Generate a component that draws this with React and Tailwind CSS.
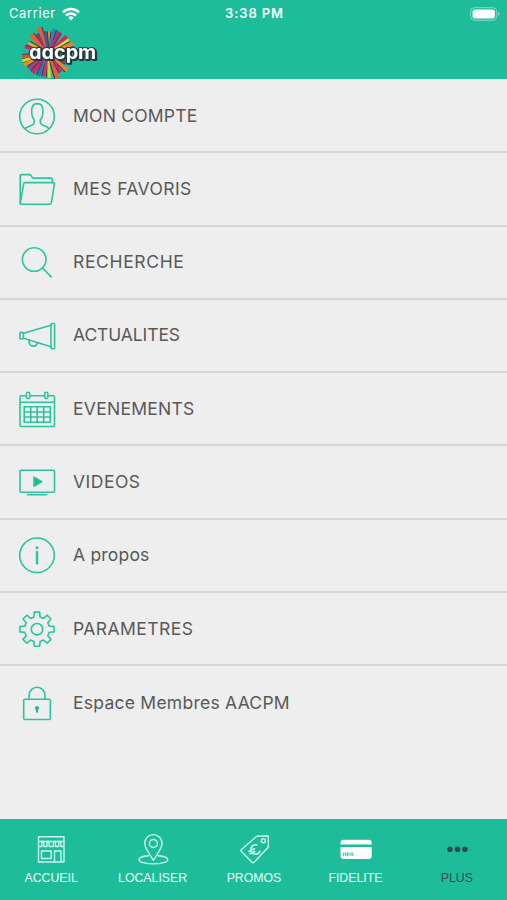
const Icon = ({ children }) => (
    <svg
        viewBox="0 0 40 40"
        className="h-10 w-10 shrink-0"
        fill="none"
        stroke="#2cc3a0"
        strokeWidth="1.6"
        strokeLinejoin="round"
        strokeLinecap="round"
    >
        {children}
    </svg>
);

const TabIcon = ({ children }) => (
    <svg
        viewBox="0 0 36 36"
        className="h-9 w-9"
        fill="none"
        stroke="#c9f7ea"
        strokeWidth="1.4"
        strokeLinejoin="round"
        strokeLinecap="round"
    >
        {children}
    </svg>
);

// Eight teeth, four points each
const gearPoints = Array.from({ length: 8 }, (_, i) =>
    [
        [-14, 12.6],
        [-9, 17.3],
        [9, 17.3],
        [14, 12.6],
    ].map(([deg, r]) => {
        const a = ((i * 45 + deg) * Math.PI) / 180;
        return `${(20 + r * Math.sin(a)).toFixed(2)},${(20.2 - r * Math.cos(a)).toFixed(2)}`;
    })
)
    .flat()
    .join(' ');

const menu = [
    {
        label: 'MON COMPTE',
        spacing: 'tracking-[0.22px]',
        icon: (
            <>
                <circle cx="20" cy="20.5" r="17.3" />
                <path d="M8.5 32.300c1.500-2 7.300-2.500 8.500-5 .5-1.200.3-2.500.1-3.600-1.700-1.600-2.100-3.500-2.300-6-.5-5.500.2-10.100 5.500-10.100s6 4.600 5.500 10.100c-.2 2.500-.6 4.400-2.300 6-.2 1.100-.4 2.400.1 3.600 1.200 2.500 6.900 3 7.900 5" />
            </>
        ),
    },
    {
        label: 'MES FAVORIS',
        spacing: 'tracking-[0.42px]',
        icon: (
            <>
                <path d="M3.2 34.5V6.8q0-1.200 1.200-1.200h8.300q.8 0 1.300.8l1.200 2q.5.700 1.300.7h17.300q1.500 0 1.500 1.500v2.900" />
                <path d="M7.9 13.6h28.400q1.300 0 1.100 1.300l-3 19q-.3 1.400-1.500 1.400H4.300q-1.200 0-1-1.300L6.700 14.700q.2-1.100 1.200-1.100z" />
            </>
        ),
    },
    {
        label: 'RECHERCHE',
        spacing: 'tracking-[0.65px]',
        icon: (
            <>
                <circle cx="17.2" cy="17.5" r="11.8" />
                <path d="M25.5 26l8.700 8.900" />
            </>
        ),
    },
    {
        label: 'ACTUALITES',
        spacing: 'tracking-[-0.1px]',
        icon: (
            <>
                <rect x="2.8" y="16.4" width="3.6" height="6.6" rx="1" />
                <path d="M6.4 17.300L34 9.200M6.400 22.200L34 30.800M12 24.200c-.4 3.800 1.500 5.900 4.300 5.900 2.500 0 3.700-1.200 4-3" />
                <rect x="34" y="7.5" width="3.6" height="25.3" rx="1" />
            </>
        ),
    },
    {
        label: 'EVENEMENTS',
        spacing: 'tracking-[0.27px]',
        icon: (
            <>
                <path d="M9.4 6.700H4.200q-1.200 0-1.200 1.200v28.300q0 1.300 1.200 1.300h32q1.300 0 1.300-1.300V7.900q0-1.200-1.300-1.200H31M13 6.700h14.400M3 13.300h34.500" />
                <rect x="9.5" y="3.2" width="3.3" height="6.5" rx="1.6" />
                <rect x="27.6" y="3.2" width="3.3" height="6.5" rx="1.6" />
                <path d="M7.2 17.800h26.100v15.400H7.200zM7.200 23h26.100M7.200 28h26.100M13.700 17.800v15.400M20.200 17.800v15.400M26.700 17.800v15.400" />
            </>
        ),
    },
    {
        label: 'VIDEOS',
        spacing: 'tracking-[0.5px]',
        icon: (
            <>
                <rect x="3" y="8.3" width="34.5" height="22" rx="1" />
                <path d="M10.5 32.700h19" />
                <path d="M17 15.200v9l7.700-4.500z" fill="#15b995" />
            </>
        ),
    },
    {
        label: 'A propos',
        spacing: 'tracking-[0.2px]',
        icon: (
            <>
                <circle cx="20" cy="20.3" r="17.3" />
                <path d="M20 17v11.300" strokeWidth="2.4" />
                <circle cx="20" cy="12.7" r="1.5" fill="#2cc3a0" stroke="none" />
            </>
        ),
    },
    {
        label: 'PARAMETRES',
        spacing: 'tracking-[0.45px]',
        icon: (
            <>
                <polygon points={gearPoints} />
                <circle cx="20" cy="20.2" r="5.7" />
            </>
        ),
    },
    {
        label: 'Espace Membres AACPM',
        spacing: 'tracking-[0.25px]',
        icon: (
            <>
                <rect x="6.7" y="16.2" width="26.6" height="20.3" rx="1" />
                <path d="M12 16v-3.500a8 8.300 0 0 1 16 0V16" />
                <circle cx="20" cy="25" r="2" fill="#15b995" stroke="none" />
                <path d="M20 25v3.700" stroke="#15b995" strokeWidth="2.2" />
            </>
        ),
    },
];

const tabs = [
    {
        label: 'ACCUEIL',
        icon: (
            <>
                <path d="M5.500 16.500V31H31V16.500M5.500 5.800H31v4.700H5.500zM8.500 20h9.700v7.500H8.500zM21.500 31V20H28v11" />
                <path d="M5.500 10.500v5h3.200v-5h2.100v5h3.200v-5h2.100v5h4.300v-5h2.100v5h3.200v-5h2.100v5H31v-5" />
            </>
        ),
    },
    {
        label: 'LOCALISER',
        icon: (
            <>
                <path d="M18.400 29.500C15.200 23.500 9.700 17.500 9.700 12.300a8.700 8.700 0 0 1 17.400 0c0 5.200-5.500 11.200-8.700 17.200z" />
                <circle cx="18.4" cy="12.5" r="4" />
                <path d="M13.500 24.700c-5.500.4-9.500 2-9.500 4 0 2.300 6.500 4.200 14.400 4.200s14.400-1.900 14.400-4.200c0-2-4-3.600-9.500-4" />
            </>
        ),
    },
    {
        label: 'PROMOS',
        icon: (
            <>
                <path d="M20.700 5.300L31 4.700q1.300 0 1.300 1.300v10.200L18 31.300q-1 1-2 0L5.500 20.500q-.9-1 0-2z" />
                <circle cx="27.3" cy="9.7" r="2" />
                <g transform="rotate(-25 19 19)" strokeWidth="1.7">
                    <path d="M22.800 15.300a4.700 4.700 0 1 0 0 7M13 17.700h6M13 20.300h5" />
                </g>
            </>
        ),
    },
    {
        label: 'FIDELITE',
        icon: (
            <g stroke="none" fill="#fff">
                <path d="M3.500 13.500v-1.700q0-3.100 3-3.100h25q3.200 0 3.200 3.100v1.700zM3.500 16h31.200v9q0 3-3.200 3h-25q-3 0-3-3z" />
                <path
                    d="M6.500 24.500v-2.500h2v2.500M10.200 25v-3h1.900v1.900h-1.900M14 24.500v-2.500h1.500v2.500"
                    fill="none"
                    stroke="#5acfb8"
                    strokeWidth="1.2"
                />
            </g>
        ),
    },
    {
        label: 'PLUS',
        active: true,
        icon: (
            <g stroke="none" fill="#304b4e">
                <circle cx="11" cy="18.2" r="2.8" />
                <circle cx="18.5" cy="18.2" r="2.8" />
                <circle cx="26" cy="18.2" r="2.8" />
            </g>
        ),
    },
];

// [angle, length, colour, width]
const rays = [
    [2, 22, '#f08a24', 3],
    [15, 25, '#2a84b8', 3.6],
    [28, 24, '#d81f74', 4],
    [48, 25, '#d22672', 3.8],
    [57, 25, '#e3d62c', 3],
    [70, 27, '#ef7d35', 4.2],
    [84, 23, '#b8cb35', 2.6],
    [117, 21, '#70509b', 3.4],
    [132, 26, '#ef7d35', 4.4],
    [146, 23, '#d81f74', 3.2],
    [159, 27, '#ef5b35', 4.8],
    [177, 25, '#c9d530', 4],
    [190, 24, '#dc2a68', 3.6],
    [203, 25, '#2c78b0', 3.6],
    [218, 25, '#d81f74', 5],
    [232, 25, '#a63e83', 3.4],
    [244, 27, '#f08a24', 3.8],
    [253, 27, '#c9d530', 3.2],
    [262, 26, '#e94b38', 3.2],
    [285, 24, '#d81f74', 3.2],
    [297, 22, '#e6a52e', 3.2],
    [317, 25, '#ef5b35', 5],
    [330, 22, '#8a3677', 4],
    [341, 27, '#ef5b35', 4.4],
    [352, 22, '#405b96', 3.4],
];

const Logo = () => (
    <svg viewBox="0 0 100 53" className="ml-5 h-[53px] w-[100px] overflow-visible">
        <circle cx="28" cy="26" r="10" fill="#3b4149" />
        {rays.map(([angle, length, color, width]) => (
            <g key={angle} transform={`rotate(${angle} 28 26)`}>
                <path d={`M28.800 22L${29.1 - width / 2} ${26.5 - length}h${width}L29.900 22z`} fill="#28494b" />
                <path d={`M27.200 22L${28 - width / 2} ${26 - length}h${width}L28.800 22z`} fill={color} />
            </g>
        ))}
        <text
            transform="translate(9 32) scale(1.12 1)"
            x="0"
            y="0"
            textLength="60"
            lengthAdjust="spacingAndGlyphs"
            fontSize="19"
            fontWeight="700"
            fill="#fff"
            stroke="#2b383d"
            strokeWidth="2.2"
            strokeLinejoin="round"
            paintOrder="stroke"
            className="[font-family:Inter,sans-serif] [font-feature-settings:'cv11'] drop-shadow-[1px_1px_0_#263438]"
        >
            aacpm
        </text>
    </svg>
);

const StatusBar = () => (
    <div className="grid h-[27px] grid-cols-3 items-center pr-[7px] pl-[9px] text-[13px] text-white [font-family:Inter,sans-serif]">
        <div className="flex items-center gap-1.5">
            <span className="tracking-[0.6px]">Carrier</span>
            <svg viewBox="0 0 18 14" className="h-[14px] w-[18px]" fill="none" stroke="#fff" strokeWidth="2.5">
                <path d="M1 5.400a11.300 11.300 0 0 1 16 0M4 8.600a7.100 7.100 0 0 1 10 0" />
                <path d="M9 13.500l-2.700-2.900a3.800 3.800 0 0 1 5.400 0z" fill="#fff" stroke="none" />
            </svg>
        </div>
        <span className="text-center font-semibold tracking-[0.9px]">3:38 PM</span>
        <svg viewBox="0 0 30 14" className="h-[14px] w-[30px] justify-self-end">
            <rect x="0.7" y="0.7" width="26" height="12.6" rx="3.8" fill="none" stroke="#80dcc8" />
            <rect x="2.5" y="2.5" width="22.4" height="9" rx="2.2" fill="#fff" />
            <path d="M28 5v4q1.500-.6 1.500-2T28 5z" fill="#80dcc8" />
        </svg>
    </div>
);

const App = () => {
    return (
        <div className="flex h-[900px] w-[507px] flex-col overflow-hidden bg-[#eeeeee]">
            <header className="h-[79px] shrink-0 bg-[#1dbd9c]">
                <StatusBar />
                <Logo />
            </header>

            {/* Menu */}
            <ul className="flex-1 pt-px">
                {menu.map(({ label, spacing, icon }, i) => (
                    <li
                        key={label}
                        className={`flex h-[73.3px] items-center gap-4 pl-[17px] ${
                            i < menu.length - 1 ? 'border-b-2 border-[#d5d5d5]' : ''
                        }`}
                    >
                        <Icon>{icon}</Icon>
                        <span className={`text-[17.5px] text-[#585858] [font-family:Inter,sans-serif] ${spacing}`}>
                            {label}
                        </span>
                    </li>
                ))}
            </ul>

            {/* Bottom tabs */}
            <nav className="grid h-[81px] shrink-0 grid-cols-5 bg-[#1dbd9c] pt-3">
                {tabs.map(({ label, icon, active }) => (
                    <div key={label} className="flex flex-col items-center pl-px">
                        <TabIcon>{icon}</TabIcon>
                        <span
                            className={`mt-[3px] text-[12.3px] leading-4 [font-family:'Liberation_Sans',Arial,sans-serif] ${
                                active ? 'text-[#304b4e]' : 'text-[#e6fff8]'
                            }`}
                        >
                            {label}
                        </span>
                    </div>
                ))}
            </nav>
        </div>
    );
};

export default App;
